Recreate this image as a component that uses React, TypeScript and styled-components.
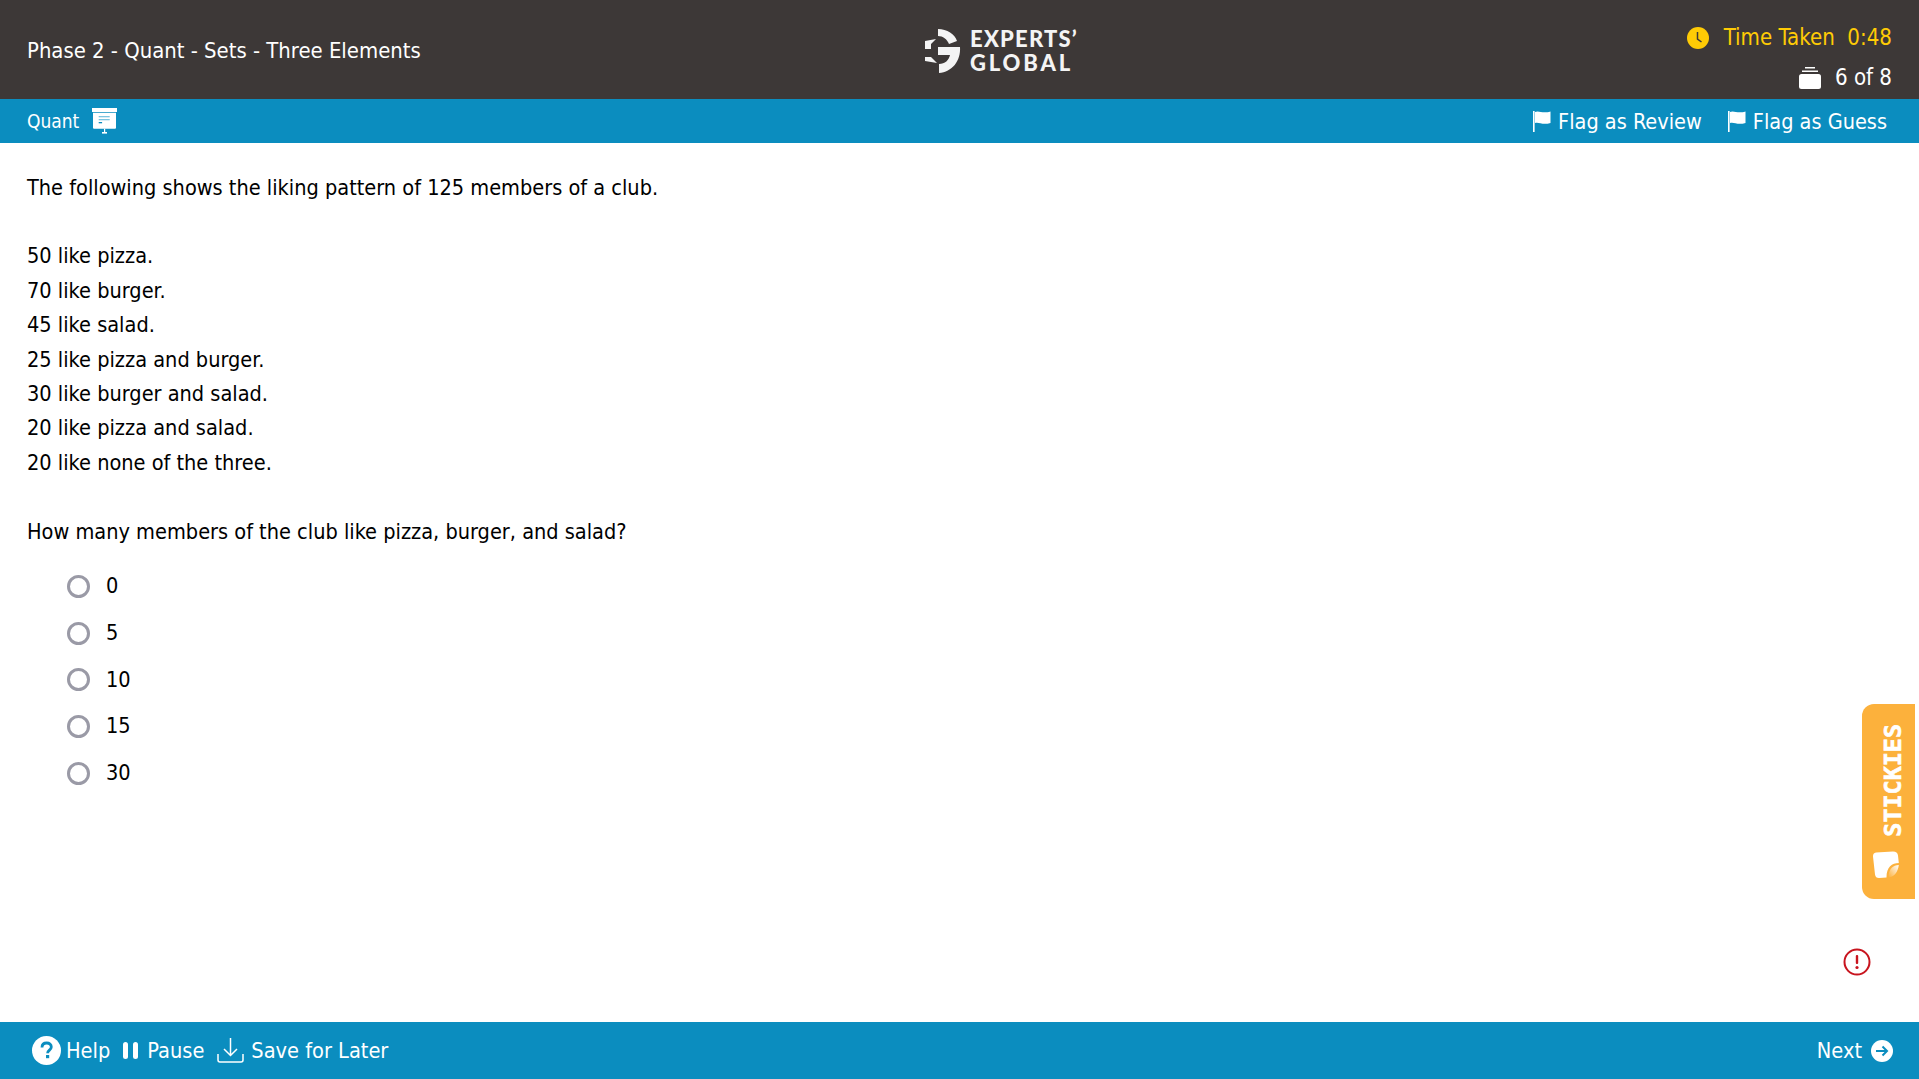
import React from "react";
import styled, { createGlobalStyle } from "styled-components";

const GlobalStyle = createGlobalStyle`
  html, body {
    margin: 0;
    padding: 0;
    height: 100%;
    background: #fff;
  }
  #root {
    height: 100%;
  }
  * {
    box-sizing: border-box;
  }
`;

const Page = styled.div`
  position: relative;
  display: flex;
  flex-direction: column;
  height: 100vh;
  overflow: hidden;
  font-family: "DejaVu Sans", Tahoma, sans-serif;
  font-stretch: condensed;
  color: #000;
`;

const Header = styled.header`
  display: flex;
  align-items: center;
  justify-content: space-between;
  flex: 0 0 99px;
  padding: 0 27px;
  background: #3d3837;
  color: #fff;
`;

const Title = styled.div`
  flex: 1 1 0;
  padding-top: 1px;
  font-size: 21.9px;
`;

const Logo = styled.div`
  display: flex;
  align-items: center;
  gap: 9px;
  margin-left: 84px;
  padding-top: 2px;
`;

const LogoText = styled.div`
  font-family: "Lato", sans-serif;
  font-weight: 900;
  font-size: 22px;
  line-height: 24px;
  color: #f4f4f4;
`;

const LogoLine = styled.div<{ $spacing: number }>`
  letter-spacing: ${(p) => p.$spacing}px;
`;

const Status = styled.div`
  flex: 1 1 0;
  display: flex;
  flex-direction: column;
  align-items: flex-end;
  gap: 15px;
  padding-top: 16px;
  font-size: 22.1px;
  line-height: 25px;
`;

const StatusRow = styled.div<{ $accent?: boolean }>`
  display: flex;
  align-items: center;
  gap: ${(p) => (p.$accent ? "15px" : "14px")};
  color: ${(p) => (p.$accent ? "#ffcb05" : "#fff")};
`;

const SubBar = styled.div`
  display: flex;
  align-items: center;
  justify-content: space-between;
  flex: 0 0 44px;
  padding: 0 32px 0 27px;
  background: #0b8dbf;
  color: #fff;
`;

const Section = styled.div`
  display: flex;
  align-items: center;
  gap: 13px;
  font-size: 19px;
`;

const Flags = styled.div`
  display: flex;
  gap: 26px;
  font-size: 21.5px;
`;

const FlagButton = styled.div`
  display: flex;
  align-items: center;
  gap: 7px;
`;

const Main = styled.main`
  flex: 1 1 auto;
  padding: 27.5px 27px 0;
  font-size: 21.55px;
  line-height: 34.4px;
`;

const Paragraph = styled.p`
  margin: 0 0 34.4px;
`;

const Line = styled.div``;

const Options = styled.div`
  display: flex;
  flex-direction: column;
  margin-top: -20.5px;
  padding-left: 40px;
`;

const Option = styled.label`
  display: flex;
  align-items: center;
  gap: 16px;
  height: 46.8px;
`;

const Radio = styled.span`
  width: 23px;
  height: 23px;
  border: 3px solid #9a9aa6;
  border-radius: 50%;
  background: #fff;
`;

const Stickies = styled.div`
  position: absolute;
  top: 704px;
  right: 4px;
  display: flex;
  flex-direction: column;
  align-items: center;
  gap: 14px;
  width: 53px;
  height: 195px;
  padding-top: 20px;
  border-radius: 12px 0 0 12px;
  background: #fcb13c;
  color: #fff;
`;

const StickiesLabel = styled.span`
  writing-mode: vertical-rl;
  transform: rotate(180deg);
  margin-left: 8px;
  font-family: "DejaVu Sans Mono", monospace;
  font-weight: 700;
  font-size: 23.4px;
  line-height: 26px;
  -webkit-text-stroke: 0.6px #fff;
`;

const NoteSvg = styled.svg`
  margin-right: 5px;
`;

const AlertIcon = styled.svg`
  position: absolute;
  top: 948px;
  right: 48px;
`;

const Footer = styled.footer`
  display: flex;
  align-items: center;
  justify-content: space-between;
  flex: 0 0 57px;
  padding: 0 26px 0 32px;
  background: #0b8dbf;
  color: #fff;
  font-size: 21.6px;
`;

const FooterGroup = styled.div`
  display: flex;
  align-items: center;
  gap: 13px;
`;

const FooterButton = styled.div<{ $gap: number }>`
  display: flex;
  align-items: center;
  gap: ${(p) => p.$gap}px;
`;

const LogoMark = () => (
  <svg width="36" height="44" viewBox="0 0 36 44" fill="#f4f4f4">
    <path d="M13 0 C22 0 30 5 32 12 L24 15 C22 10 18 7 13 7 Z" />
    <path d="M0 12 L11 10 L6 15 L6 20 L0 20 Z" />
    <path d="M13 18 L35 18 C36 32 27 43 14 44 L14 35 C20 35 24 31 25 26 L13 26 Z" />
    <path d="M0 28 L6 28 L12 34 L0 32 Z" />
  </svg>
);

const ClockIcon = () => (
  <svg width="22" height="22" viewBox="0 0 22 22">
    <circle cx="11" cy="11" r="11" fill="#ffcb05" />
    <path d="M10.5 5 V12 L14.5 15" fill="none" stroke="#3d3837" strokeWidth="1.5" />
  </svg>
);

const StackIcon = () => (
  <svg width="22" height="22" viewBox="0 0 22 22">
    <rect x="6" y="0" width="10" height="1.5" fill="#fff" />
    <rect x="3" y="3.5" width="16" height="1.5" fill="#fff" />
    <rect x="0" y="7" width="22" height="15" rx="2.5" fill="#fff" />
  </svg>
);

const BoardIcon = () => (
  <svg width="25" height="26" viewBox="0 0 25 26">
    <rect x="0" y="0" width="25" height="4" fill="#fff" />
    <path d="M1 4.7 H24 V19.5 Q24 20.7 23 20.7 H2 Q1 20.7 1 19.5 Z" fill="#fff" />
    <rect x="6.7" y="8" width="11" height="1.3" fill="#7cc4e0" />
    <rect x="6.7" y="11" width="11" height="1.3" fill="#7cc4e0" />
    <rect x="6.7" y="14" width="3.4" height="1.3" fill="#0b8dbf" />
    <rect x="12" y="20.7" width="1.2" height="4" fill="#fff" />
    <rect x="10" y="24" width="5" height="1.6" fill="#fff" />
  </svg>
);

const FlagIcon = () => (
  <svg width="18" height="22" viewBox="0 0 18 22">
    <rect x="0" y="1" width="1.6" height="21" fill="#fff" />
    <path d="M2 2 C6 0 9 4 17.5 1.5 V13 C9 15.5 6 11.5 2 13 Z" fill="#fff" />
  </svg>
);

const HelpIcon = () => (
  <svg width="29" height="29" viewBox="0 0 29 29">
    <circle cx="14.5" cy="14.5" r="14.5" fill="#fff" />
    <path
      d="M10 11.5 C10 8.5 12 7 14.7 7 C17.5 7 19.3 8.7 19.3 11 C19.3 14 15.6 14.3 15.6 17.2"
      fill="none"
      stroke="#0b8dbf"
      strokeWidth="2.8"
    />
    <rect x="14" y="19" width="3.2" height="3.2" fill="#0b8dbf" />
  </svg>
);

const PauseIcon = () => (
  <svg width="15" height="17" viewBox="0 0 15 17">
    <rect x="0" y="0" width="5" height="17" rx="2.5" fill="#fff" />
    <rect x="10" y="0" width="5" height="17" rx="2.5" fill="#fff" />
  </svg>
);

const SaveIcon = () => (
  <svg width="27" height="25" viewBox="0 0 27 25" fill="none" stroke="#fff" strokeWidth="1.5">
    <path d="M13.5 0 V17 M7 11 L13.5 17.5 L20 11" />
    <path d="M1 16 V22 Q1 24 3 24 H24 Q26 24 26 22 V16" />
  </svg>
);

const NextIcon = () => (
  <svg width="22" height="22" viewBox="0 0 22 22">
    <circle cx="11" cy="11" r="11" fill="#fff" />
    <path d="M5 11 H16 M11.5 6.5 L16 11 L11.5 15.5" fill="none" stroke="#0b8dbf" strokeWidth="2" />
  </svg>
);

const NoteIcon = () => (
  <NoteSvg width="28" height="28" viewBox="0 0 28 28">
    <defs>
      <linearGradient id="fold" x1="0" y1="1" x2="1" y2="0">
        <stop offset="0" stopColor="#fcb13c" />
        <stop offset="1" stopColor="#fff" />
      </linearGradient>
    </defs>
    <path
      d="M4 1.5 L21 0.5 Q25.5 0.5 26 4.5 L26.8 12 C20 12 14.5 16 14.5 26.5 L7 27 Q3.5 27 3 23.5 L1 5.5 Q0.8 2 4 1.5 Z"
      fill="#fff"
    />
    <path d="M26.8 14 C21 14 16.5 18 16.5 26.5 C22 26 26 21 26.8 14 Z" fill="url(#fold)" />
  </NoteSvg>
);

const facts = [
  "50 like pizza.",
  "70 like burger.",
  "45 like salad.",
  "25 like pizza and burger.",
  "30 like burger and salad.",
  "20 like pizza and salad.",
  "20 like none of the three.",
];

const answers = ["0", "5", "10", "15", "30"];

export default function App() {
  return (
    <Page>
      <GlobalStyle />
      <Header>
        <Title>Phase 2 - Quant - Sets - Three Elements</Title>
        <Logo>
          <LogoMark />
          <LogoText>
            <LogoLine $spacing={1.2}>EXPERTS’</LogoLine>
            <LogoLine $spacing={2.8}>GLOBAL</LogoLine>
          </LogoText>
        </Logo>
        <Status>
          <StatusRow $accent>
            <ClockIcon />
            <span>Time Taken&nbsp; 0:48</span>
          </StatusRow>
          <StatusRow>
            <StackIcon />
            <span>6 of 8</span>
          </StatusRow>
        </Status>
      </Header>
      <SubBar>
        <Section>
          Quant
          <BoardIcon />
        </Section>
        <Flags>
          <FlagButton>
            <FlagIcon />
            Flag as Review
          </FlagButton>
          <FlagButton>
            <FlagIcon />
            Flag as Guess
          </FlagButton>
        </Flags>
      </SubBar>
      <Main>
        <Paragraph>The following shows the liking pattern of 125 members of a club.</Paragraph>
        <Paragraph>
          {facts.map((fact) => (
            <Line key={fact}>{fact}</Line>
          ))}
        </Paragraph>
        <Paragraph>How many members of the club like pizza, burger, and salad?</Paragraph>
        <Options>
          {answers.map((answer) => (
            <Option key={answer}>
              <Radio />
              {answer}
            </Option>
          ))}
        </Options>
      </Main>
      <Stickies>
        <StickiesLabel>STICKIES</StickiesLabel>
        <NoteIcon />
      </Stickies>
      <AlertIcon width="28" height="28" viewBox="0 0 28 28">
        <circle cx="14" cy="14" r="12.5" fill="none" stroke="#c8141e" strokeWidth="2" />
        <rect x="12.8" y="7" width="2.4" height="9" rx="1" fill="#c8141e" />
        <circle cx="14" cy="19.5" r="1.6" fill="#c8141e" />
      </AlertIcon>
      <Footer>
        <FooterGroup>
          <FooterButton $gap={5}>
            <HelpIcon />
            Help
          </FooterButton>
          <FooterButton $gap={9}>
            <PauseIcon />
            Pause
          </FooterButton>
          <FooterButton $gap={7}>
            <SaveIcon />
            Save for Later
          </FooterButton>
        </FooterGroup>
        <FooterButton $gap={9}>
          Next
          <NextIcon />
        </FooterButton>
      </Footer>
    </Page>
  );
}
